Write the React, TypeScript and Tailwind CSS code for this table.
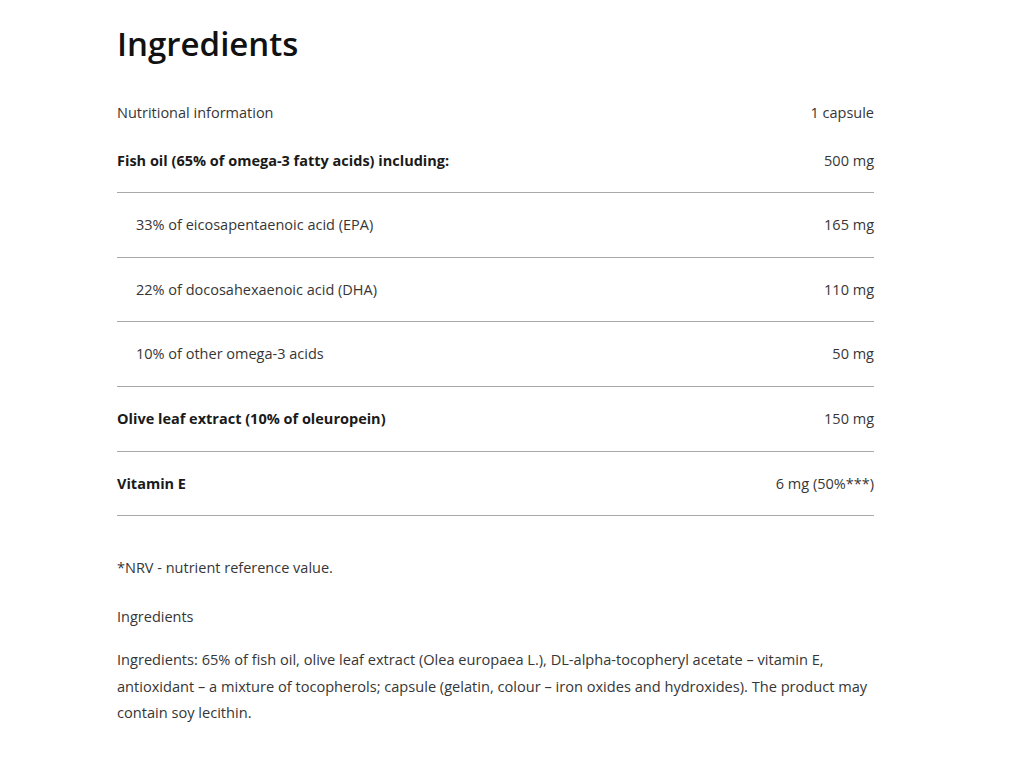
import React from "react";

const rows: { label: string; value: string; bold?: boolean; indent?: boolean; h: string }[] = [
  { label: "Fish oil (65% of omega-3 fatty acids) including:", value: "500 mg", bold: true, h: "h-[64px]" },
  { label: "33% of eicosapentaenoic acid (EPA)", value: "165 mg", indent: true, h: "h-[65px]" },
  { label: "22% of docosahexaenoic acid (DHA)", value: "110 mg", indent: true, h: "h-[64px]" },
  { label: "10% of other omega-3 acids", value: "50 mg", indent: true, h: "h-[65px]" },
  { label: "Olive leaf extract (10% of oleuropein)", value: "150 mg", bold: true, h: "h-[65px]" },
  { label: "Vitamin E", value: "6 mg (50%***)", bold: true, h: "h-[64px]" },
];

export default function App() {
  return (
    <div
      className="min-h-[768px] bg-white text-[#363636]"
      style={{ fontFamily: '"Open Sans", "Noto Sans", sans-serif' }}
    >
      <div className="ml-[117px] w-[757px] pt-[23px]">
        <h1 className="text-[33px] leading-[42px] font-semibold text-[#111]">Ingredients</h1>
        <div className="mt-[32px] flex h-[32px] items-center justify-between text-[14.5px]">
          <span>Nutritional information</span>
          <span>1 capsule</span>
        </div>
        {rows.map((r) => (
          <div
            key={r.label}
            className={
              r.h +
              " flex items-center justify-between border-b border-[#a8a8a8] text-[14.5px]"
            }
          >
            <span
              className={
                (r.indent ? "pl-[19px] " : "") + (r.bold ? "font-bold text-[#1a1a1a]" : "")
              }
            >
              {r.label}
            </span>
            <span>{r.value}</span>
          </div>
        ))}
        <p className="mt-[40px] text-[14.5px] leading-[24px]">*NRV - nutrient reference value.</p>
        <p className="mt-[25px] text-[14.5px] leading-[24px]">Ingredients</p>
        <p className="mt-[17px] text-[14.6px] leading-[26.5px]">
          <span className="block whitespace-nowrap">
            Ingredients: 65% of fish oil, olive leaf extract (Olea europaea L.), DL-alpha-tocopheryl
            acetate – vitamin E,
          </span>
          <span className="block whitespace-nowrap">
            antioxidant – a mixture of tocopherols; capsule (gelatin, colour – iron oxides and
            hydroxides). The product may
          </span>
          <span className="block whitespace-nowrap">contain soy lecithin.</span>
        </p>
      </div>
    </div>
  );
}
